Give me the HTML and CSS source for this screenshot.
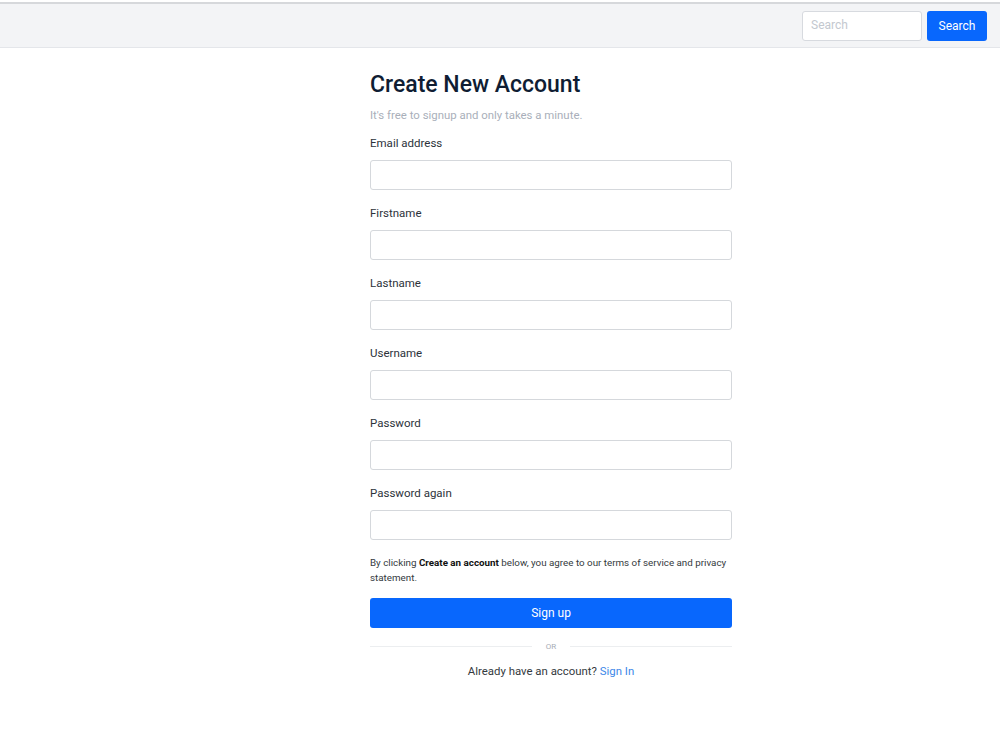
FILE: index.html
```html
<!DOCTYPE html>
<html lang="en">
<head>
    <meta charset="UTF-8">
    <meta name="viewport" content="width=device-width, initial-scale=1.0">
    <title>Create New Account</title>
    <link rel="stylesheet" href="styles.css">
</head>
<body>
    <header class="topbar">
        <form class="search">
            <input type="text" class="search-input" placeholder="Search">
            <button type="button" class="btn btn-primary search-btn">Search</button>
        </form>
    </header>

    <main class="page">
        <section class="signup">
            <h1>Create New Account</h1>
            <p class="lead">It's free to signup and only takes a minute.</p>

            <form class="signup-form">
                <label for="email">Email address</label>
                <input type="email" id="email">

                <label for="firstname">Firstname</label>
                <input type="text" id="firstname">

                <label for="lastname">Lastname</label>
                <input type="text" id="lastname">

                <label for="username">Username</label>
                <input type="text" id="username">

                <label for="password">Password</label>
                <input type="password" id="password">

                <label for="password2">Password again</label>
                <input type="password" id="password2">

                <p class="terms">By clicking <strong>Create an account</strong> below, you agree to our terms of service and privacy statement.</p>

                <button type="submit" class="btn btn-primary btn-block">Sign up</button>
            </form>

            <div class="divider"><span>OR</span></div>

            <p class="signin">Already have an account? <a href="#">Sign In</a></p>
        </section>
    </main>
</body>
</html>
```

FILE: styles.css
```css
body {
    margin: 0;
    font-family: Roboto, "Liberation Sans", sans-serif;
    color: #212529;
    background: #fff;
}

.topbar {
    margin-top: 2px;
    height: 43px;
    border-top: 2px solid #d6d8db;
    border-bottom: 1px solid #e4e6ea;
    background: #f3f4f6;
    display: flex;
    justify-content: flex-end;
    align-items: center;
    padding: 0 13px;
}

.search {
    display: flex;
    gap: 5px;
}

.search-input {
    width: 120px;
    height: 30px;
    box-sizing: border-box;
    padding: 0 8px 1px;
    border: 1px solid #d7dadf;
    border-radius: 3px;
    font-family: inherit;
    font-size: 12px;
}

.search-input::placeholder {
    color: #c3c8cf;
}

.btn {
    border: none;
    border-radius: 3px;
    font-family: inherit;
    font-size: 12px;
    cursor: pointer;
}

.btn-primary {
    background: #0867fd;
    color: #fff;
}

.search-btn {
    width: 60px;
    height: 30px;
    line-height: 28px;
    padding-bottom: 2px;
}

.page {
    padding-left: 370px;
}

.signup {
    width: 362px;
    padding-top: 22px;
}

h1 {
    margin: 0;
    font-size: 23px;
    font-weight: 500;
    color: #0f1d33;
    line-height: 30px;
}

.lead {
    margin: 8px 0 0;
    font-size: 11.4px;
    color: #a9afba;
}

.signup-form label {
    display: block;
    margin-top: 15px;
    font-size: 11.5px;
    line-height: 16px;
    color: #2c323a;
}

.signup-form label:first-child {
    margin-top: 13px;
}

.signup-form label + input {
    margin-top: 9px;
}

.signup-form input {
    display: block;
    width: 100%;
    height: 30px;
    box-sizing: border-box;
    border: 1px solid #d5d8dc;
    border-radius: 3px;
    margin-bottom: 9px;
}

.terms {
    margin: 15px 0 0;
    font-size: 9.8px;
    line-height: 15px;
    color: #343a40;
}

.terms strong {
    color: #111;
}

.btn-block {
    display: block;
    width: 100%;
    height: 30px;
    margin-top: 13px;
}

.divider {
    display: flex;
    align-items: center;
    margin-top: 14px;
    font-size: 8px;
    color: #a7adb5;
}

.divider::before,
.divider::after {
    content: "";
    flex: 1;
    border-top: 1px solid #eceef0;
}

.divider span {
    padding: 0 14px;
}

.signin {
    margin: 13px 0 0;
    text-align: center;
    font-size: 11.4px;
    color: #343a40;
}

.signin a {
    color: #3c87e8;
    text-decoration: none;
}
```
